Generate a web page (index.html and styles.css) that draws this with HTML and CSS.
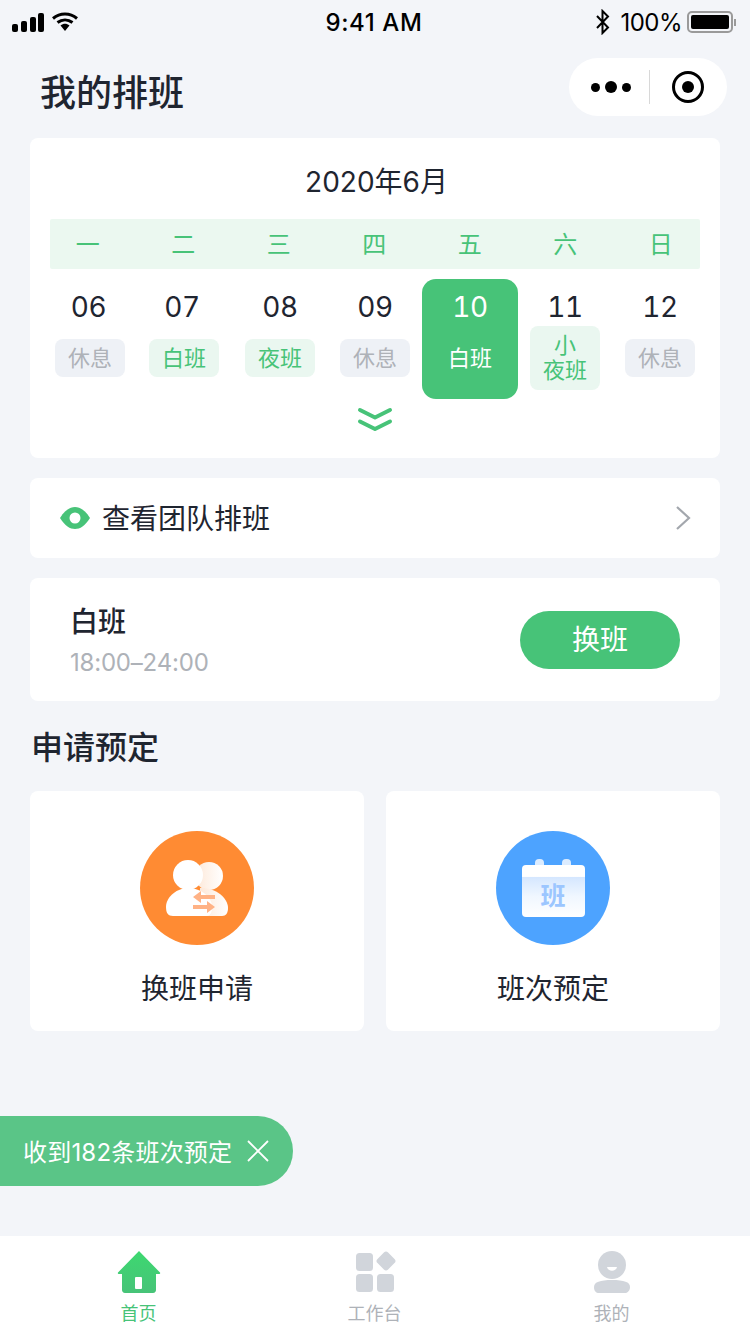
FILE: index.html
```html
<!DOCTYPE html>
<html lang="zh-CN">
<head>
    <meta charset="UTF-8">
    <meta name="viewport" content="width=device-width, initial-scale=1.0">
    <title>我的排班</title>
    <link rel="stylesheet" href="styles.css">
</head>
<body>
<div class="page">
    <div class="status-bar">
        <div class="status-left">
            <svg width="36" height="20" viewBox="0 0 36 20"><rect x="0" y="12" width="6" height="8" rx="2"/><rect x="9" y="9" width="6" height="11" rx="2"/><rect x="18" y="5" width="6" height="15" rx="2"/><rect x="26" y="1" width="6" height="19" rx="2"/></svg>
            <svg width="26" height="20" viewBox="0 0 26 20"><path d="M1 6.500C8 0.500 18 0.500 25 6.500" fill="none" stroke="#000" stroke-width="3"/><path d="M5.500 10.500C10 7 16 7 20.500 10.500" fill="none" stroke="#000" stroke-width="3"/><path d="M8.500 13.500C11.500 11.200 14.500 11.200 17.500 13.500L13 19Z"/></svg>
        </div>
        <div class="status-time">9:41 AM</div>
        <div class="status-right">
            <svg width="16" height="26" viewBox="0 0 16 26"><path d="M2 7L13 18.500L7.500 24V2L13 7.500L2 19" fill="none" stroke="#000" stroke-width="2"/></svg>
            <span>100%</span>
            <div class="battery"><div class="battery-fill"></div></div>
            <div class="battery-cap"></div>
        </div>
    </div>

    <div class="nav-bar">
        <h1 class="nav-title">我的排班</h1>
        <div class="capsule">
            <div class="capsule-dots"><i></i><b></b><i></i></div>
            <div class="capsule-line"></div>
            <div class="capsule-target"><i></i></div>
        </div>
    </div>

    <div class="card calendar">
        <div class="month">2020年6月</div>
        <div class="week-bar">
            <div class="week-grid">
                <span>一</span><span>二</span><span>三</span><span>四</span><span>五</span><span>六</span><span>日</span>
            </div>
        </div>
        <div class="day-grid">
            <div class="day"><div class="num">06</div><div class="tag-area"><span class="tag rest">休息</span></div></div>
            <div class="day"><div class="num">07</div><div class="tag-area"><span class="tag work">白班</span></div></div>
            <div class="day"><div class="num">08</div><div class="tag-area"><span class="tag work">夜班</span></div></div>
            <div class="day"><div class="num">09</div><div class="tag-area"><span class="tag rest">休息</span></div></div>
            <div class="day active"><div class="num">10</div><div class="tag-area"><span class="tag">白班</span></div></div>
            <div class="day"><div class="num">11</div><div class="tag-area"><span class="tag work tall">小<br>夜班</span></div></div>
            <div class="day"><div class="num">12</div><div class="tag-area"><span class="tag rest">休息</span></div></div>
        </div>
        <div class="expand">
            <svg width="38" height="26" viewBox="0 0 38 26"><path d="M4 3L19 10.500L34 3M4 14.500L19 22L34 14.500" fill="none" stroke="#47c378" stroke-width="4" stroke-linecap="round" stroke-linejoin="round"/></svg>
        </div>
    </div>

    <div class="card team-row">
        <svg class="eye" width="30" height="22" viewBox="0 0 30 22"><path d="M0 11C5 3 10 0 15 0C20 0 25 3 30 11C25 19 20 22 15 22C10 22 5 19 0 11Z" fill="#47c378"/><circle cx="15" cy="11" r="5.500" fill="#fff"/></svg>
        <span class="team-text">查看团队排班</span>
        <svg class="chevron" width="16" height="26" viewBox="0 0 16 26"><path d="M2 2L14 13L2 24" fill="none" stroke="#a3a7ad" stroke-width="2.200"/></svg>
    </div>

    <div class="card shift-row">
        <div class="shift-info">
            <div class="shift-name">白班</div>
            <div class="shift-time">18:00–24:00</div>
        </div>
        <div class="swap-btn">换班</div>
    </div>

    <h2 class="section-title">申请预定</h2>

    <div class="apply-grid">
        <div class="card apply-card">
            <div class="apply-icon orange">
                <svg width="114" height="114" viewBox="0 0 114 114">
                    <defs><linearGradient id="ghost" x1="0" y1="0" x2="1" y2="0"><stop offset="0" stop-color="#fde8d8"/><stop offset="1" stop-color="#fff"/></linearGradient></defs>
                    <circle cx="69" cy="45" r="14" fill="url(#ghost)"/>
                    <path d="M60 85V57C74 56 88 66 88 77C88 82 86 85 82 85Z" fill="url(#ghost)"/>
                    <circle cx="48" cy="44" r="15" fill="#fff"/>
                    <path d="M26 76C26 65 38 57 48 57C60 57 72 65 72 76C72 82 70 85 66 85H33C28 85 26 82 26 76Z" fill="#fff"/>
                    <path d="M75 64H61V60L53 66L61 72V68H75ZM53 74H67V70L75 76L67 82V78H53Z" fill="#ffb285"/>
                </svg>
            </div>
            <div class="apply-name">换班申请</div>
        </div>
        <div class="card apply-card">
            <div class="apply-icon blue">
                <div class="cal-icon">
                    <i class="cal-pin left"></i><i class="cal-pin right"></i>
                    <div class="cal-body">班</div>
                </div>
            </div>
            <div class="apply-name">班次预定</div>
        </div>
    </div>

    <div class="toast">
        <span>收到182条班次预定</span>
        <svg width="24" height="24" viewBox="0 0 24 24"><path d="M2 2L22 22M22 2L2 22" fill="none" stroke="#fff" stroke-width="1.800"/></svg>
    </div>

    <div class="tab-bar">
        <div class="tab current">
            <svg width="44" height="44" viewBox="0 0 44 44">
                <defs><linearGradient id="home" x1="0" y1="0" x2="0" y2="1"><stop offset="0" stop-color="#3dd870"/><stop offset="1" stop-color="#47c378"/></linearGradient></defs>
                <path d="M22 1L43 22.500C43.500 23.500 43 24 42 24H39V40C39 41.500 38 43 36 43H8C6 43 5 41.500 5 40V24H2C1 24 .5 23.500 1 22.500Z" fill="url(#home)"/>
                <rect x="18" y="27" width="7" height="12" rx="1" fill="#fff"/>
            </svg>
            <span>首页</span>
        </div>
        <div class="tab">
            <svg width="44" height="44" viewBox="0 0 44 44" fill="#d1d5db">
                <rect x="3" y="3" width="17" height="18" rx="3.500"/>
                <rect x="25.500" y="3.500" width="15" height="15" rx="3" transform="rotate(45 33 11)"/>
                <rect x="3" y="24" width="17" height="18" rx="3.500"/>
                <rect x="24" y="24" width="17" height="18" rx="3.500"/>
            </svg>
            <span>工作台</span>
        </div>
        <div class="tab">
            <svg width="44" height="44" viewBox="0 0 44 44" fill="#d1d5db">
                <circle cx="22" cy="15" r="14"/>
                <path d="M17 17H27C26 22 18 22 17 17Z" fill="#fff"/>
                <path d="M4 37C4 32 10 30 22 30C34 30 40 32 40 37C40 41 37 43 35 43H9C6 43 4 41 4 37Z"/>
            </svg>
            <span>我的</span>
        </div>
    </div>
</div>
</body>
</html>
```
FILE: styles.css
```css
* {
    box-sizing: border-box;
}
body {
    margin: 0;
    background: #f3f5f9;
    color: #1f2530;
    font-family: Inter, "Noto Sans CJK SC", sans-serif;
}
.page {
    position: relative;
    width: 750px;
    height: 1334px;
    display: flex;
    flex-direction: column;
    overflow: hidden;
}

/* status bar */
.status-bar {
    height: 44px;
    padding: 0 14px 0 12px;
    display: flex;
    align-items: center;
    justify-content: space-between;
    color: #000;
}
.status-left {
    display: flex;
    align-items: center;
    gap: 4px;
    width: 200px;
}
.status-time {
    font-size: 24px;
    font-weight: 500;
    letter-spacing: .6px;
}
.status-right {
    display: flex;
    align-items: center;
    justify-content: flex-end;
    width: 200px;
    font-size: 24px;
}
.status-right span {
    margin: 0 5px 0 9px;
    letter-spacing: -.5px;
}
.battery {
    width: 46px;
    height: 22px;
    border: 2px solid #9a9a9a;
    border-radius: 5px;
    padding: 2px;
}
.battery-fill {
    height: 100%;
    background: #000;
    border-radius: 2px;
}
.battery-cap {
    width: 2px;
    height: 7px;
    margin-left: 1px;
    background: #9a9a9a;
}

/* nav */
.nav-bar {
    height: 94px;
    padding: 14px 23px 0 40px;
    display: flex;
    justify-content: space-between;
    align-items: flex-start;
}
.nav-title {
    margin: 13px 0 0;
    font-size: 36px;
    line-height: 44px;
    font-weight: 500;
}
.capsule {
    width: 158px;
    height: 58px;
    border-radius: 29px;
    background: #fff;
    display: flex;
    align-items: center;
}
.capsule-dots {
    width: 80px;
    display: flex;
    align-items: center;
    justify-content: center;
    gap: 5px;
    padding-left: 3px;
}
.capsule-dots i,
.capsule-dots b {
    display: block;
    background: #000;
    border-radius: 50%;
}
.capsule-dots i {
    width: 9px;
    height: 9px;
}
.capsule-dots b {
    width: 12px;
    height: 12px;
}
.capsule-line {
    width: 1px;
    height: 34px;
    background: #d8d8d8;
}
.capsule-target {
    width: 32px;
    height: 32px;
    margin-left: 22px;
    border: 3px solid #000;
    border-radius: 50%;
    display: flex;
    align-items: center;
    justify-content: center;
}
.capsule-target i {
    width: 12px;
    height: 12px;
    background: #000;
    border-radius: 50%;
}

/* cards */
.card {
    background: #fff;
    border-radius: 8px;
}
.calendar {
    margin: 0 30px;
    height: 320px;
    padding: 0 20px;
}
.month {
    height: 81px;
    line-height: 88px;
    text-align: center;
    font-size: 28px;
    padding-left: 3px;
}
.week-bar {
    height: 50px;
    background: #ebf8f0;
    border-radius: 2px;
}
.week-grid {
    display: grid;
    grid-template-columns: repeat(7, 95.5px);
    margin-left: -10px;
}
.week-grid span {
    line-height: 52px;
    text-align: center;
    font-size: 24px;
    color: #47c378;
}
.day-grid {
    margin-top: 10px;
    display: grid;
    grid-template-columns: repeat(7, 95px);
    justify-content: center;
}
.day {
    height: 120px;
    border-radius: 14px;
    text-align: center;
}
.day.active {
    background: #47c378;
    color: #fff;
    margin: 0 -.5px;
}
.day:nth-child(1) .num {
    padding-right: 3px;
}
.day:nth-child(2) .num {
    padding-right: 6px;
}
.day:nth-child(2) .tag {
    margin-left: -2px;
}
.num {
    height: 56px;
    line-height: 56px;
    font-size: 28px;
    font-variant-numeric: tabular-nums;
    letter-spacing: -.5px;
}
.tag-area {
    height: 46px;
    display: flex;
    align-items: center;
    justify-content: center;
}
.tag {
    width: 70px;
    height: 38px;
    padding-top: 3px;
    border-radius: 8px;
    font-size: 22px;
    line-height: 32px;
    flex-shrink: 0;
}
.tag.rest {
    background: #eef1f6;
    color: #aeb2b8;
}
.tag.work {
    background: #eaf7f0;
    color: #47c378;
}
.tag.tall {
    height: 64px;
    padding-top: 7px;
    line-height: 25px;
}
.expand {
    margin-top: 8px;
    display: flex;
    justify-content: center;
}

.team-row {
    margin: 20px 30px 0;
    height: 80px;
    padding: 0 29px 0 30px;
    display: flex;
    align-items: center;
}
.team-text {
    margin-left: 12px;
    margin-top: -2px;
    font-size: 28px;
    flex: 1;
}
.shift-row {
    margin: 20px 30px 0;
    height: 123px;
    padding: 0 40px;
    display: flex;
    align-items: center;
    justify-content: space-between;
}
.shift-info {
    padding-top: 2px;
}
.shift-name {
    font-size: 28px;
    font-weight: 500;
    line-height: 42px;
}
.shift-time {
    margin-top: 2px;
    font-size: 24px;
    line-height: 36px;
    color: #aeb2b8;
    letter-spacing: -.2px;
}
.swap-btn {
    width: 160px;
    height: 58px;
    border-radius: 29px;
    background: #47c378;
    color: #fff;
    text-align: center;
    font-size: 28px;
    line-height: 58px;
}
.section-title {
    margin: 25px 0 0 31px;
    height: 65px;
    font-size: 32px;
    line-height: 44px;
    font-weight: 500;
}
.apply-grid {
    margin: 0 30px;
    display: grid;
    grid-template-columns: 334px 334px;
    gap: 22px;
}
.apply-card {
    height: 240px;
    padding-top: 40px;
    display: flex;
    flex-direction: column;
    align-items: center;
}
.apply-icon {
    width: 114px;
    height: 114px;
    border-radius: 50%;
    display: flex;
    align-items: center;
    justify-content: center;
}
.apply-icon.orange {
    background: #ff8b33;
}
.apply-icon.blue {
    background: #4da3ff;
}
.apply-name {
    margin-top: 24px;
    font-size: 28px;
    line-height: 40px;
}
.cal-icon {
    position: relative;
    width: 63px;
    height: 58px;
    padding-top: 6px;
}
.cal-pin {
    position: absolute;
    top: 0;
    width: 9px;
    height: 12px;
    border-radius: 4px;
    background: #dcecff;
}
.cal-pin.left {
    left: 13px;
}
.cal-pin.right {
    left: 40px;
}
.cal-body {
    position: relative;
    height: 52px;
    border-radius: 4px;
    background: linear-gradient(#fff 0, #fff 22%, #d5e7ff 24%, #f0f7ff 60%, #fff 100%);
    color: #9cc6ff;
    text-align: center;
    font-size: 25px;
    font-weight: 700;
    line-height: 62px;
}

.toast {
    position: absolute;
    left: 0;
    top: 1116px;
    width: 293px;
    height: 70px;
    padding: 0 23px 2px 23px;
    border-radius: 0 35px 35px 0;
    background: #5ac587;
    color: #fff;
    font-size: 24px;
    letter-spacing: .2px;
    display: flex;
    align-items: center;
    justify-content: space-between;
}
.toast svg {
    margin-top: 2px;
}

.tab-bar {
    margin-top: auto;
    height: 98px;
    background: #fff;
    display: grid;
    grid-template-columns: 277px 195px 279px;
}
.tab {
    display: flex;
    flex-direction: column;
    align-items: center;
    padding-top: 14px;
    font-size: 18px;
    line-height: 24px;
    color: #aeb2b8;
}
.tab span {
    margin-top: 8px;
}
.tab.current {
    color: #47c378;
}
```
